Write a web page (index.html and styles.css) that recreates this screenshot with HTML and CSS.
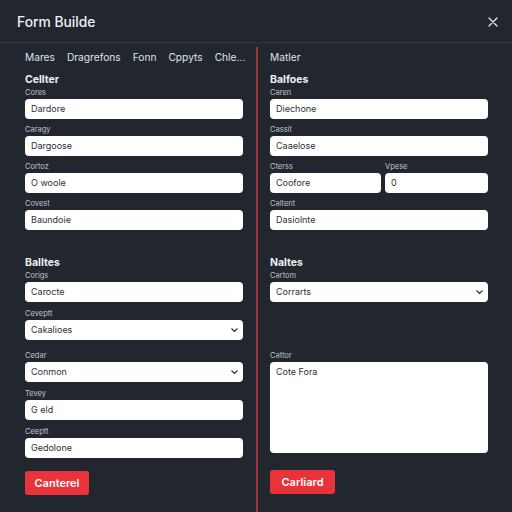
FILE: index.html
```html
<!DOCTYPE html>
<html>
<head>
<meta charset="utf-8">
<link rel="stylesheet" href="styles.css">
</head>
<body>
<header class="top">
  <h1 class="title">Form Builde</h1>
  <svg class="close" width="10" height="10" viewBox="0 0 10 10"><path d="M1 1L9 9M9 1L1 9" stroke="#e6e8ec" stroke-width="1.3" stroke-linecap="round"/></svg>
</header>
<main class="cols">
  <section class="col left">
    <nav class="tabs">
      <span>Mares</span><span>Dragrefons</span><span>Fonn</span><span>Cppyts</span><span>Chle...</span>
    </nav>
    <div class="group">
      <h2 class="head">Cellter</h2>
      <div class="field"><label>Cores</label><div class="input">Dardore</div></div>
      <div class="field"><label>Caragy</label><div class="input">Dargoose</div></div>
      <div class="field"><label>Cortoz</label><div class="input">O woole</div></div>
      <div class="field"><label>Covest</label><div class="input">Baundoie</div></div>
    </div>
    <div class="group g2">
      <h2 class="head">Balltes</h2>
      <div class="field"><label>Corigs</label><div class="input">Carocte</div></div>
      <div class="field"><label>Ceveptt</label><div class="input select">Cakalioes<svg class="chev" width="7" height="4" viewBox="0 0 7 4"><path d="M0.5 0.5L3.5 3.5L6.5 0.5" stroke="#333" stroke-width="1.2" fill="none"/></svg></div></div>
      <div class="field f-gap"><label>Cedar</label><div class="input select">Conmon<svg class="chev" width="7" height="4" viewBox="0 0 7 4"><path d="M0.5 0.5L3.5 3.5L6.5 0.5" stroke="#333" stroke-width="1.2" fill="none"/></svg></div></div>
      <div class="field"><label>Tevey</label><div class="input">G eld</div></div>
      <div class="field"><label>Ceeptt</label><div class="input">Gedolone</div></div>
    </div>
    <button class="btn">Canterel</button>
  </section>
  <section class="col right">
    <div class="sub">Matler</div>
    <div class="group">
      <h2 class="head">Balfoes</h2>
      <div class="field"><label>Caren</label><div class="input">Diechone</div></div>
      <div class="field"><label>Cassit</label><div class="input">Caaelose</div></div>
      <div class="pair">
        <div class="field"><label>Cterss</label><div class="input">Coofore</div></div>
        <div class="field"><label>Vpese</label><div class="input">0</div></div>
      </div>
      <div class="field"><label>Caltent</label><div class="input">Dasiolnte</div></div>
    </div>
    <div class="group g2">
      <h2 class="head">Naltes</h2>
      <div class="field"><label>Cartom</label><div class="input select">Corrarts<svg class="chev" width="7" height="4" viewBox="0 0 7 4"><path d="M0.5 0.5L3.5 3.5L6.5 0.5" stroke="#333" stroke-width="1.2" fill="none"/></svg></div></div>
      <div class="field f-far"><label>Cattor</label><div class="input area">Cote Fora</div></div>
    </div>
    <button class="btn btn-r">Carliard</button>
  </section>
</main>
</body>
</html>
```
FILE: styles.css
```css
* { box-sizing: border-box; margin: 0; padding: 0; }
html, body { width: 512px; height: 512px; overflow: hidden; }
body {
  background: #22272f;
  font-family: "Inter", "Open Sans", sans-serif;
  color: #e8eaee;
}
.top {
  height: 43px;
  display: flex;
  align-items: center;
  justify-content: space-between;
  padding: 0 14px 0 17px;
  border-bottom: 1px solid #323840;
}
.title { font-size: 13.8px; font-weight: 500; color: #f0f1f3; margin-top: 1px; }
.close { display: block; margin-top: 1px; }
.cols {
  display: flex;
  margin-top: 4px;
  height: 465px;
}
.col { display: flex; flex-direction: column; }
.left {
  width: 258px;
  padding: 2px 13px 0 25px;
  border-right: 2px solid #9e3640;
}
.right {
  flex: 1;
  padding: 2px 24px 0 12px;
}
.tabs {
  display: flex;
  gap: 12px;
  height: 16px;
  align-items: center;
  font-size: 10.2px;
  color: #dfe2e6;
  white-space: nowrap;
}
.sub { height: 16px; line-height: 16px; font-size: 10.2px; color: #dfe2e6; }
.group { margin-top: 7px; display: flex; flex-direction: column; }
.g2 { margin-top: 20px; }
.head { font-size: 10.5px; font-weight: 700; height: 12px; line-height: 12px; color: #eef0f2; margin: 2px 0 1px; }
.field { display: flex; flex-direction: column; margin-bottom: 5px; }
.g2 .field { margin-bottom: 6px; }
.field label { font-size: 7.5px; height: 12px; line-height: 12px; color: #bfc3ca; }
.f-gap { margin-top: 4px; }
.g2 .f-far { margin-top: 42px; }
.input {
  height: 20px;
  background: #ffffff;
  border-radius: 4px;
  font-size: 9px;
  line-height: 20px;
  color: #2c2f34;
  padding: 0 6px;
  display: flex;
  align-items: center;
  justify-content: space-between;
}
.chev { display: block; margin-right: -1px; }
.area { height: 91px; align-items: flex-start; line-height: 18px; padding-top: 1px; }
.pair { display: grid; grid-template-columns: 111px 1fr; gap: 4px; }
.btn {
  margin-top: 7px;
  width: 64px;
  height: 24px;
  border: none;
  border-radius: 3px;
  background: #e8333a;
  color: #fff;
  font-family: "Inter", "Open Sans", sans-serif;
  font-size: 11px;
  font-weight: 600;
}
.btn-r { width: 65px; margin-top: 11px; }
```
